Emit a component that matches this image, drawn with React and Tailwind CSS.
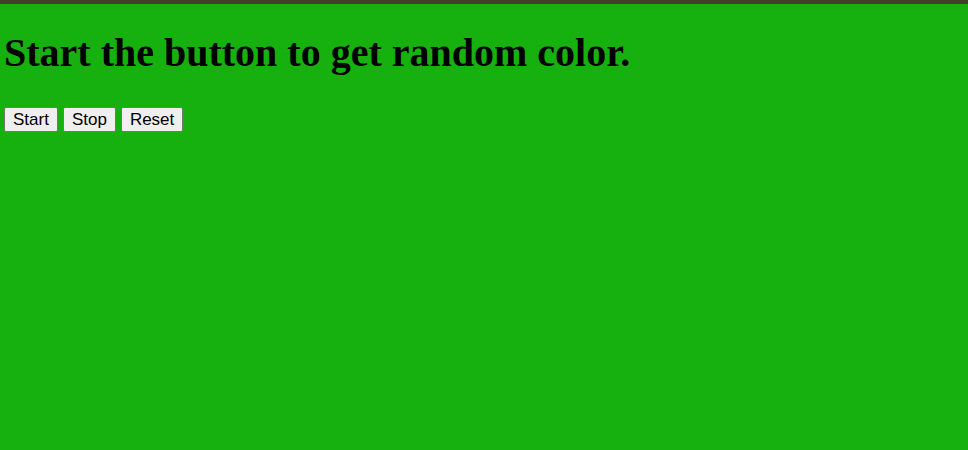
export default function App() {
  return (
    <div className="min-h-[450px] bg-[#16b10f] border-t-[4px] border-[#433f2c] px-[4px]">
      <h1 className="pt-[26px] text-[40px] leading-[46px] font-bold text-black" style={{ fontFamily: '"Liberation Serif", serif' }}>
        Start the button to get random color.
      </h1>
      <div className="mt-[31px] flex gap-[5px]" style={{ fontFamily: '"Liberation Sans", Arial, sans-serif' }}>
        <button className="h-[25px] px-[8px] bg-[#efefef] border border-[#767676] rounded-[2px] text-[17px] text-black leading-none">Start</button>
        <button className="h-[25px] px-[8px] bg-[#efefef] border border-[#767676] rounded-[2px] text-[17px] text-black leading-none">Stop</button>
        <button className="h-[25px] px-[8px] bg-[#efefef] border border-[#767676] rounded-[2px] text-[17px] text-black leading-none">Reset</button>
      </div>
    </div>
  );
}
